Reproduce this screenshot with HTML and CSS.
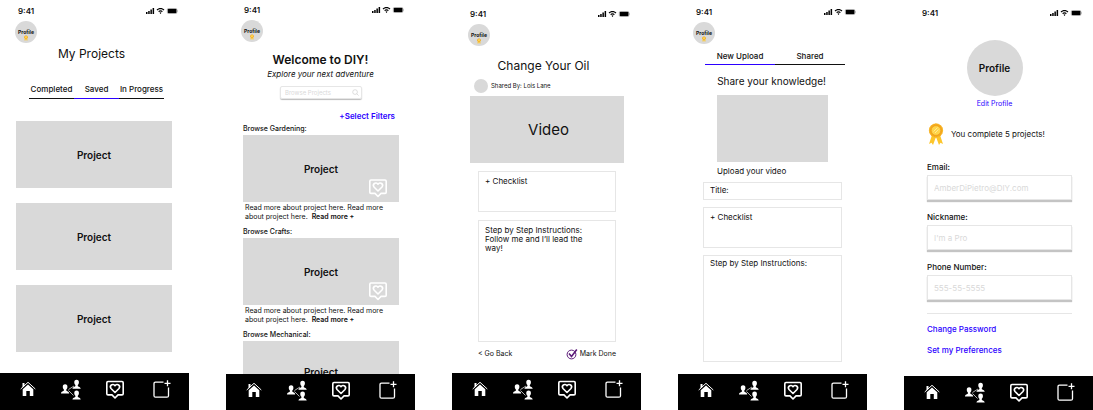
FILE: index.html
```html
<!DOCTYPE html>
<html lang="en">
<head>
<meta charset="utf-8">
<meta name="viewport" content="width=device-width, initial-scale=1">
<title>DIY app screens</title>
<link rel="stylesheet" href="styles.css">
</head>
<body>
<svg class="sprite" aria-hidden="true">
  <symbol id="signals" viewBox="0 0 32 6">
    <path d="M0 4h1.500v2H0zM2.200 3h1.500v3H2.200zM4.400 1.600h1.500V6H4.400zM6.600 0h1.500v6H6.600z"/>
    <path d="M14.500 0c1.500 0 2.900.6 3.900 1.600l-.8.900c-.8-.8-1.900-1.300-3.100-1.300s-2.300.5-3.100 1.300l-.8-.9C11.600.6 13 0 14.500 0zM14.500 2.200c.9 0 1.700.4 2.300 1l-.8.900c-.4-.4-.9-.6-1.500-.6s-1.100.2-1.500.6l-.8-.9c.6-.6 1.400-1 2.300-1zM14.500 4.200l1 .5-1 1.300-1-1.300z"/>
    <rect x="21.200" y=".2" width="9.800" height="5.600" rx="1.400" fill="none" stroke="#999" stroke-width=".4"/>
    <rect x="21.700" y=".7" width="8.800" height="4.600" rx=".8"/>
    <path d="M31.300 2h.5v2h-.5z" fill="#999"/>
  </symbol>
  <symbol id="medal" viewBox="0 0 16 22">
    <path d="M4 12L1 21l2.500-1.200L5 22l3-8zM12 12l3 9-2.500-1.200L11 22l-3-8z" fill="#fdc62b"/>
    <circle cx="8" cy="7.500" r="7" fill="#f5a81c"/>
    <circle cx="8" cy="7.500" r="6.600" fill="none" stroke="#fbc02d" stroke-width="1" stroke-dasharray="1.500 1"/>
    <circle cx="8" cy="7.500" r="4.800" fill="#ffd54a" stroke="#e8971a" stroke-width=".6"/>
    <path d="M5.500 8.500l4-4M7 10l3.500-3.500" stroke="#ffe993" stroke-width="1"/>
  </symbol>
  <symbol id="home" viewBox="0 0 20 20">
    <path d="M4.500 3.500h2v3l-2 1.800zM10 5l5.300 4.800v6.600h-3.500v-5H8.300v5H4.700V9.800z" fill="#fff"/>
    <path d="M2.700 9.500L10 2.800l7.300 6.700" fill="none" stroke="#fff" stroke-width="1"/>
  </symbol>
  <symbol id="share" viewBox="0 0 20 21">
    <path d="M7.500 10.500L13 7M7.500 11.500l5 5" stroke="#ddd" stroke-width=".8"/>
    <g fill="#fff">
      <path id="person" d="M4.100 0C5.800 0 6.500 1.100 6.400 2.700c0 1.200-.5 2-1.100 2.600v.9c.3.900 2.900.7 2.900 2.900H0c0-2.200 2.600-2 2.900-2.900v-.9c-.6-.6-1.100-1.400-1.100-2.600C1.700 1.100 2.400 0 4.100 0z" transform="translate(0 5.300)"/>
      <use href="#person" x="11.500" y="-4.600"/>
      <use href="#person" x="11.500" y="6.200"/>
    </g>
  </symbol>
  <symbol id="heart" viewBox="0 0 20 20">
    <path d="M3 2h14q1.200 0 1.200 1.200v11q0 1.200-1.200 1.200h-4L10 18.500l-3-3.100H3q-1.200 0-1.200-1.200v-11Q1.800 2 3 2z" fill="none" stroke="currentColor" stroke-width="1.600" stroke-linejoin="round"/>
    <path d="M10 13L6 9C4 6.400 7.700 3.200 10 6.200c2.300-3 6 .2 4 2.800z" fill="none" stroke="currentColor" stroke-width="1.600" stroke-linejoin="round"/>
  </symbol>
  <symbol id="add" viewBox="0 0 24 20">
    <path d="M15.500 2.700H7.500q-1.500 0-1.500 1.500v12q0 1.500 1.500 1.500h11.500q1.500 0 1.500-1.500V8" fill="none" stroke="#fff" stroke-width="1.300"/>
    <path d="M19.500 .8v6M16.500 3.800h6" stroke="#fff" stroke-width="1.300"/>
  </symbol>
  <symbol id="check" viewBox="0 0 12 12">
    <circle cx="5.500" cy="6.500" r="4.400" fill="none" stroke="#5b1a78" stroke-width="1"/>
    <path d="M3 5.500l2.500 3L10.800 1.500" fill="none" stroke="#5b1a78" stroke-width="1.600"/>
  </symbol>
  <symbol id="lens" viewBox="0 0 8 8">
    <circle cx="3.500" cy="3.500" r="2.700" fill="none" stroke="#c8c8c8" stroke-width=".7"/>
    <path d="M5.500 5.500L7.500 7.500" stroke="#c8c8c8" stroke-width=".7"/>
  </symbol>
</svg>

<main class="screens">
  <section class="phone phone-projects">
    <div class="status"><span>9:41</span><svg class="signals"><use href="#signals"/></svg></div>
    <button class="avatar">Profile<svg class="badge"><use href="#medal"/></svg></button>
    <h1 class="title">My Projects</h1>
    <div class="tabs">
      <button class="tab">Completed</button>
      <button class="tab active">Saved</button>
      <button class="tab">In Progress</button>
    </div>
    <div class="cards">
      <div class="card">Project</div>
      <div class="card">Project</div>
      <div class="card">Project</div>
    </div>
    <nav class="nav">
      <button aria-label="Home"><svg><use href="#home"/></svg></button>
      <button aria-label="Community"><svg><use href="#share"/></svg></button>
      <button aria-label="Saved"><svg><use href="#heart"/></svg></button>
      <button class="wide" aria-label="Upload"><svg><use href="#add"/></svg></button>
    </nav>
  </section>

  <section class="phone phone-browse">
    <div class="status"><span>9:41</span><svg class="signals"><use href="#signals"/></svg></div>
    <button class="avatar">Profile<svg class="badge"><use href="#medal"/></svg></button>
    <h1 class="welcome">Welcome to DIY!</h1>
    <p class="tagline">Explore your next adventure</p>
    <label class="search"><input type="search" placeholder="Browse Projects" aria-label="Browse Projects"><svg><use href="#lens"/></svg></label>
    <a class="filters" href="#">+Select Filters</a>
    <div class="feed">
      <article>
        <h2>Browse Gardening:</h2>
        <div class="card">Project<button class="like" aria-label="Save"><svg><use href="#heart"/></svg></button></div>
        <p>Read more about project here. Read more about project here. &nbsp;<a href="#">Read more +</a></p>
      </article>
      <article>
        <h2>Browse Crafts:</h2>
        <div class="card">Project<button class="like" aria-label="Save"><svg><use href="#heart"/></svg></button></div>
        <p>Read more about project here. Read more about project here. &nbsp;<a href="#">Read more +</a></p>
      </article>
      <article>
        <h2>Browse Mechanical:</h2>
        <div class="card peek">Project</div>
      </article>
    </div>
    <nav class="nav">
      <button aria-label="Home"><svg><use href="#home"/></svg></button>
      <button aria-label="Community"><svg><use href="#share"/></svg></button>
      <button aria-label="Saved"><svg><use href="#heart"/></svg></button>
      <button class="wide" aria-label="Upload"><svg><use href="#add"/></svg></button>
    </nav>
  </section>

  <section class="phone phone-detail">
    <div class="status"><span>9:41</span><svg class="signals"><use href="#signals"/></svg></div>
    <button class="avatar">Profile<svg class="badge"><use href="#medal"/></svg></button>
    <h1 class="title">Change Your Oil</h1>
    <div class="byline"><span class="author"></span>Shared By: Lois Lane</div>
    <div class="video">Video</div>
    <div class="box checklist">+ Checklist</div>
    <div class="box steps">Step by Step Instructions:<br>Follow me and I’ll lead the way!</div>
    <div class="actions">
      <button>&lt; Go Back</button>
      <button class="done"><svg><use href="#check"/></svg>Mark Done</button>
    </div>
    <nav class="nav">
      <button aria-label="Home"><svg><use href="#home"/></svg></button>
      <button aria-label="Community"><svg><use href="#share"/></svg></button>
      <button aria-label="Saved"><svg><use href="#heart"/></svg></button>
      <button class="wide" aria-label="Upload"><svg><use href="#add"/></svg></button>
    </nav>
  </section>

  <section class="phone phone-upload">
    <div class="status"><span>9:41</span><svg class="signals"><use href="#signals"/></svg></div>
    <button class="avatar">Profile<svg class="badge"><use href="#medal"/></svg></button>
    <div class="tabs">
      <button class="tab active">New Upload</button>
      <button class="tab">Shared</button>
    </div>
    <h1 class="prompt">Share your knowledge!</h1>
    <div class="drop"></div>
    <p class="caption">Upload your video</p>
    <label class="box name">Title:<input type="text"></label>
    <label class="box checklist">+ Checklist<textarea></textarea></label>
    <label class="box steps">Step by Step Instructions:<textarea></textarea></label>
    <nav class="nav">
      <button aria-label="Home"><svg><use href="#home"/></svg></button>
      <button aria-label="Community"><svg><use href="#share"/></svg></button>
      <button aria-label="Saved"><svg><use href="#heart"/></svg></button>
      <button class="wide" aria-label="Upload"><svg><use href="#add"/></svg></button>
    </nav>
  </section>

  <section class="phone phone-profile">
    <div class="status"><span>9:41</span><svg class="signals"><use href="#signals"/></svg></div>
    <div class="portrait">Profile</div>
    <a class="edit" href="#">Edit Profile</a>
    <div class="award"><svg><use href="#medal"/></svg>You complete 5 projects!</div>
    <form class="form">
      <label>Email:<input type="email" placeholder="AmberDiPietro@DIY.com"></label>
      <label>Nickname:<input type="text" placeholder="I'm a Pro"></label>
      <label>Phone Number:<input type="tel" placeholder="555-55-5555"></label>
    </form>
    <div class="links">
      <a href="#">Change Password</a>
      <a href="#">Set my Preferences</a>
    </div>
    <nav class="nav">
      <button aria-label="Home"><svg><use href="#home"/></svg></button>
      <button aria-label="Community"><svg><use href="#share"/></svg></button>
      <button aria-label="Saved"><svg><use href="#heart"/></svg></button>
      <button class="wide" aria-label="Upload"><svg><use href="#add"/></svg></button>
    </nav>
  </section>
</main>
</body>
</html>
```

FILE: styles.css
```css
* {
  box-sizing: border-box;
  margin: 0;
  padding: 0;
}

body {
  background: #fff;
  color: #111;
  font: 8px/10px Inter, "Liberation Sans", sans-serif;
}

button,
input,
textarea {
  border: 0;
  background: none;
  color: inherit;
  font: inherit;
  outline: 0;
}

a {
  color: #2b00ff;
  text-decoration: none;
}

svg {
  display: block;
}

.sprite {
  position: absolute;
  width: 0;
  height: 0;
}

.screens {
  display: grid;
  grid-template-columns: repeat(5, minmax(0, 1fr));
  gap: 37px;
  height: 100vh;
}

.phone {
  display: flex;
  flex-direction: column;
  min-height: 0;
  overflow: hidden;
}

.phone > * {
  flex-shrink: 0;
}

.phone-projects { padding-top: 1px; }
.phone-detail { padding-top: 4px; }
.phone-upload { padding-top: 2px; }
.phone-profile { padding-top: 3px; }

.status {
  display: flex;
  align-items: center;
  justify-content: space-between;
  height: 20px;
  padding: 0 11px 0 18px;
  font-weight: 600;
}

.signals {
  width: 32px;
  height: 6px;
}

.avatar {
  display: flex;
  flex-direction: column;
  align-items: center;
  width: 22px;
  height: 22px;
  margin-left: 15px;
  padding-top: 8px;
  border-radius: 50%;
  background: #d9d9d9;
  font-size: 5px;
  font-weight: 700;
  line-height: 6px;
}

.phone-detail .avatar { margin-left: 16px; }

.badge {
  width: 4px;
  height: 6px;
}

.title,
.welcome,
.prompt {
  padding-right: 6px;
  font-size: 12px;
  font-weight: 400;
  line-height: 16px;
  text-align: center;
}

.phone-projects .title { margin-top: 3px; }
.phone-detail .title { margin-top: 12px; }

.tabs {
  display: flex;
}

.phone-projects .tabs { margin: 22px 25px 0 29px; }
.phone-upload .tabs { margin: 7px 22px 0 27px; }

.tab {
  flex: 1;
  padding-bottom: 3px;
  border-bottom: 1px solid #111;
  font-weight: 500;
  line-height: 11px;
  white-space: nowrap;
}

.phone-upload .tab {
  padding-bottom: 2px;
}

.tab.active {
  border-color: #2b00ff;
}

.cards {
  display: flex;
  flex-direction: column;
  gap: 15px;
  padding: 22px 17px 0 16px;
}

.card,
.video {
  display: flex;
  align-items: center;
  justify-content: center;
  height: 67px;
  background: #d9d9d9;
  font-size: 10px;
  font-weight: 600;
}

.nav {
  display: flex;
  align-items: flex-start;
  justify-content: space-between;
  height: 37px;
  margin-top: auto;
  padding: 6px 17px 0 18px;
  background: #000;
  color: #fff;
}

.phone-browse .nav,
.phone-upload .nav { height: 36px; }
.phone-profile .nav { height: 34px; }

.nav svg {
  width: 20px;
  height: 21px;
}

.nav .wide svg {
  width: 24px;
}

.welcome {
  margin-top: 10px;
  padding-right: 0;
  font-weight: 600;
}

.tagline {
  font-style: italic;
  line-height: 12px;
  text-align: center;
}

.search {
  display: flex;
  align-items: center;
  height: 13px;
  margin: 6px 53px 0 54px;
  padding: 0 2px 0 4px;
  border: 1px solid #e6e6e6;
  border-radius: 2px;
  box-shadow: 0 1px 1px #bbb;
  font-size: 6px;
}

.search input {
  flex: 1;
  min-width: 0;
}

.search svg {
  width: 7px;
  height: 7px;
}

::placeholder {
  color: #d9d9d9;
  opacity: 1;
}

.filters {
  margin: 12px 20px 3px 0;
  font-weight: 600;
  text-align: right;
}

.feed {
  display: flex;
  flex: 1 1 0;
  flex-direction: column;
  gap: 6px;
  min-height: 0;
  padding: 0 16px 0 17px;
  overflow: hidden;
}

.feed h2 {
  margin-bottom: 2px;
  font-size: 7px;
  font-weight: 500;
  line-height: 9px;
}

.feed .card {
  position: relative;
}

.feed .peek {
  padding-bottom: 6px;
}

.feed p {
  margin-top: 1px;
  padding-left: 2px;
  font-size: 7px;
  line-height: 9px;
}

.feed p a {
  color: inherit;
  font-weight: 600;
}

.like {
  position: absolute;
  right: 11px;
  bottom: 4px;
  color: #fff;
}

.like svg {
  width: 20px;
  height: 20px;
}

.byline {
  display: flex;
  align-items: center;
  gap: 3px;
  margin: 5px 0 3px 22px;
  font-size: 6px;
}

.author {
  width: 14px;
  height: 14px;
  border-radius: 50%;
  background: #d9d9d9;
}

.video {
  margin: 0 17px 0 18px;
  padding-left: 3px;
  font-size: 15px;
  font-weight: 400;
}

.box {
  display: flex;
  flex-direction: column;
  margin: 8px 25px 0;
  padding: 4px 6px;
  border: 1px solid #e6e6e6;
}

.phone-detail .box {
  display: block;
  margin-left: 26px;
  padding: 5px 30px 5px 6px;
  line-height: 9px;
}

.box.name {
  flex-direction: row;
  height: 18px;
  margin-top: 6px;
  padding: 2px 6px;
}

.box input,
.box textarea {
  flex: 1;
  min-width: 0;
  min-height: 0;
  resize: none;
}

.checklist { height: 41px; }
.phone-upload .checklist { margin-top: 7px; }
.phone-detail .steps { height: 122px; }
.phone-upload .steps {
  height: 107px;
  margin-top: 7px;
  padding-top: 2px;
}

.actions {
  display: flex;
  justify-content: space-between;
  margin: 6px 25px 0 26px;
  font-size: 7px;
  line-height: 12px;
}

.done {
  display: flex;
  align-items: center;
  gap: 2px;
}

.done svg {
  width: 12px;
  height: 12px;
}

.prompt {
  margin-top: 8px;
  padding-right: 2px;
  font-size: 10px;
}

.drop {
  height: 67px;
  margin: 6px 39px 4px;
  background: #d9d9d9;
}

.caption {
  margin-left: 39px;
}

.portrait {
  display: grid;
  place-items: center;
  align-self: center;
  width: 56px;
  height: 56px;
  margin: 17px 8px 0 0;
  border-radius: 50%;
  background: #d9d9d9;
  font-size: 10px;
  font-weight: 600;
}

.edit {
  margin: 3px 8px 0 0;
  font-size: 7px;
  text-align: center;
}

.award {
  display: flex;
  align-items: center;
  gap: 7px;
  margin: 14px 0 0 24px;
}

.award svg {
  width: 16px;
  height: 22px;
}

.form {
  display: flex;
  flex-direction: column;
  gap: 12px;
  margin: 17px 21px 0 23px;
}

.form label {
  display: flex;
  flex-direction: column;
  gap: 3px;
  font-weight: 500;
}

.form input {
  height: 25px;
  padding: 0 6px;
  border: 1px solid #e6e6e6;
  box-shadow: 0 2px 1px #c4c4c4;
  font-weight: 400;
}

.links {
  display: flex;
  flex-direction: column;
  gap: 11px;
  margin: 13px 21px 0 23px;
  padding-top: 10px;
  border-top: 1px solid #e6e6e6;
  font-weight: 500;
}
```
